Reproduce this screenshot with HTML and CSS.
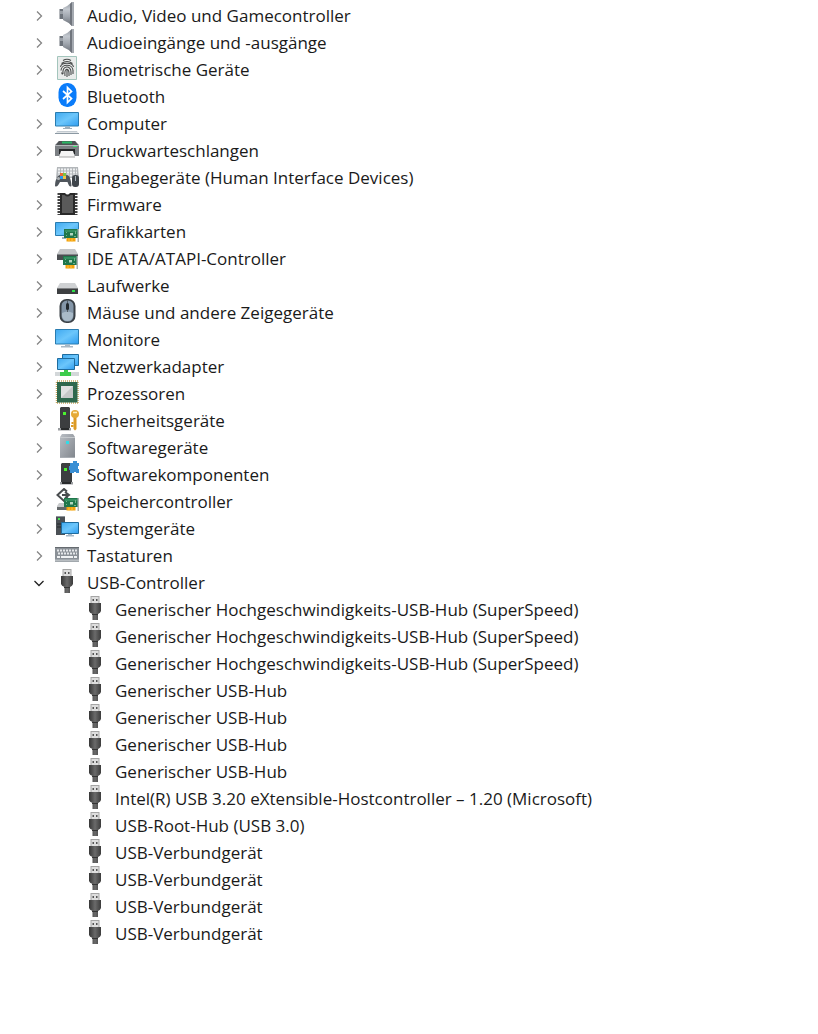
FILE: index.html
```html
<!DOCTYPE html>
<html lang="de">
<head>
    <meta charset="UTF-8">
    <meta name="viewport" content="width=device-width, initial-scale=1.0">
    <title>Geräte-Manager</title>
    <link rel="stylesheet" href="styles.css">
</head>
<body>
    <!-- shared shapes -->
    <svg class="defs" width="0" height="0" aria-hidden="true">
        <defs>
            <linearGradient id="screen" x1="0" y1="0" x2="1" y2="1">
                <stop offset="0" stop-color="#3fa9f0"/>
                <stop offset="0.5" stop-color="#6cc6fb"/>
                <stop offset="1" stop-color="#2f9df0"/>
            </linearGradient>
            <linearGradient id="steel" x1="0" y1="0" x2="0" y2="1">
                <stop offset="0" stop-color="#8b9199"/>
                <stop offset="0.3" stop-color="#c3c8cf"/>
                <stop offset="0.6" stop-color="#a1a7af"/>
                <stop offset="1" stop-color="#686d75"/>
            </linearGradient>
            <linearGradient id="silver" x1="0" y1="0" x2="1" y2="1">
                <stop offset="0" stop-color="#b9bec4"/>
                <stop offset="1" stop-color="#81868d"/>
            </linearGradient>
            <linearGradient id="plug" x1="0" y1="0" x2="1" y2="0">
                <stop offset="0" stop-color="#363636"/>
                <stop offset="0.5" stop-color="#6a6a6a"/>
                <stop offset="1" stop-color="#3c3c3c"/>
            </linearGradient>
            <symbol id="chevron" viewBox="0 0 12 12">
                <path d="M4 1.500l4.500 4.500L4 10.500" fill="none" stroke="currentColor" stroke-width="1.3"/>
            </symbol>
            <symbol id="speaker" viewBox="0 0 24 24">
                <path d="M4.500 7h4v10h-4z" fill="#6d737b"/>
                <path d="M5 9h3v3H5z" fill="#9ba1a8"/>
                <path d="M8 6q5-2 9-6v24q-4-4-9-6z" fill="url(#steel)"/>
                <path d="M15 2l2-2v24l-2-2z" fill="#70757d"/>
                <path d="M17 0h2v24h-2z" fill="#a5aab1"/>
            </symbol>
            <symbol id="usb" viewBox="0 0 24 24">
                <path d="M7.500 0h9v8h-9z" fill="#a5a5a5"/>
                <path d="M8.500 1h7v6h-7z" fill="#dedede"/>
                <path d="M9.500 3H11v2H9.500zM13 3h1.500v2H13z" fill="#555"/>
                <path d="M6 7h12v8q-.5 2-3 3v6H9.500v-6Q6.500 17 6 15z" fill="url(#plug)"/>
                <path d="M9 18.500h6" stroke="#353535"/>
            </symbol>
            <symbol id="card" viewBox="0 0 15 13">
                <path d="M0 0h14v9H0z" fill="#20774b"/>
                <path d="M1 1h12v2H1z" fill="#348f61"/>
                <path d="M6 4h3v2.500H6z" fill="#b3d8c2"/>
                <path d="M2 3h1v1H2zM2 6h1v1H2zM11 2h1v3h-1zM10 7h2v1h-2z" fill="#74b48d"/>
                <path d="M13.500 0H15v13h-1.500z" fill="#aab2b2"/>
                <path d="M2.500 9h9v3.500h-9z" fill="#f3a20b"/>
                <path d="M5 9.500v3M8 9.500v3" stroke="#ffc44c"/>
            </symbol>
        </defs>
    </svg>

    <main>
        <ul class="tree">
            <li>
                <div class="row">
                    <button class="toggle" type="button" aria-expanded="false" aria-labelledby="audio"><svg><use href="#chevron"/></svg></button>
                    <svg class="icon"><use href="#speaker"/></svg>
                    <span class="label" id="audio">Audio, Video und Gamecontroller</span>
                </div>
            </li>
            <li>
                <div class="row">
                    <button class="toggle" type="button" aria-expanded="false" aria-labelledby="audio-io"><svg><use href="#chevron"/></svg></button>
                    <svg class="icon"><use href="#speaker"/></svg>
                    <span class="label" id="audio-io">Audioeingänge und -ausgänge</span>
                </div>
            </li>
            <li>
                <div class="row">
                    <button class="toggle" type="button" aria-expanded="false" aria-labelledby="bio"><svg><use href="#chevron"/></svg></button>
                    <svg class="icon" viewBox="0 0 24 24">
                        <path d="M2.500 0.500h19v23h-19z" fill="#e9eceb" stroke="#a3c5bc"/>
                        <g fill="none" stroke="#484b4b" stroke-width="1.1">
                            <path d="M8 4.500q4-2.500 8 0M6.500 7.500q5.500-4 11 0M5.500 11c1-5 12-5 13 0M6 14.500c0-7 12-7 12 0M8 18c-1-9 8-9 8-2v3M10 20c-1-9 4-8 4-3v3M12 13v8M6.500 16.500l1 2M18 14v4"/>
                        </g>
                    </svg>
                    <span class="label" id="bio">Biometrische Geräte</span>
                </div>
            </li>
            <li>
                <div class="row">
                    <button class="toggle" type="button" aria-expanded="false" aria-labelledby="bt"><svg><use href="#chevron"/></svg></button>
                    <svg class="icon" viewBox="0 0 24 24">
                        <rect x="3.500" width="18" height="24" rx="8.500" ry="9.500" fill="#0a7cfa"/>
                        <path d="M8 8l8.500 7.500-4 4v-15l4 4L8 16" fill="none" stroke="#fff" stroke-width="1.700"/>
                    </svg>
                    <span class="label" id="bt">Bluetooth</span>
                </div>
            </li>
            <li>
                <div class="row">
                    <button class="toggle" type="button" aria-expanded="false" aria-labelledby="pc"><svg><use href="#chevron"/></svg></button>
                    <svg class="icon" viewBox="0 0 24 24">
                        <path d="M0.500 2.500h23v13.500H0.500z" fill="url(#screen)" stroke="#2a7cb0"/>
                        <path d="M10 16.500h5v1.500h2v1H8v-1h2z" fill="#9fb0bc"/>
                        <path d="M2 21h20l2 3H0z" fill="#dfe3e6"/>
                        <path d="M2 21.500h20" stroke="#c3cad0"/>
                        <path d="M0 23.500h24" stroke="#8c99a3"/>
                    </svg>
                    <span class="label" id="pc">Computer</span>
                </div>
            </li>
            <li>
                <div class="row">
                    <button class="toggle" type="button" aria-expanded="false" aria-labelledby="print"><svg><use href="#chevron"/></svg></button>
                    <svg class="icon" viewBox="0 0 24 24">
                        <path d="M4 4h16l4 4v11H0V8z" fill="#7b7f83"/>
                        <path d="M4 4h16l3 4H1z" fill="#4f5255"/>
                        <path d="M7 4.500h10v2H7z" fill="#29b765"/>
                        <path d="M0 8.500h24" stroke="#b3b7ba"/>
                        <path d="M18 9h4v1h-4z" fill="#38e26f"/>
                        <path d="M4 12h16v5H4z" fill="#252729"/>
                        <path d="M6 14h12l2 6H4z" fill="#f4f4f4"/>
                        <path d="M4 20h16" stroke="#a5a5a5"/>
                    </svg>
                    <span class="label" id="print">Druckwarteschlangen</span>
                </div>
            </li>
            <li>
                <div class="row">
                    <button class="toggle" type="button" aria-expanded="false" aria-labelledby="hid"><svg><use href="#chevron"/></svg></button>
                    <svg class="icon" viewBox="0 0 24 24">
                        <path d="M2 3h21l1 11H1z" fill="#b3b7ba"/>
                        <path d="M3 5.500h19M3 8.500h19M3 11.500h19" stroke="#eef0f1" stroke-width="1.800" stroke-dasharray="2 1"/>
                        <path d="M3 12q2-2 4 0h3q2-2 4 0 2 3 2.500 10-2 2-4-4H5q-3 6-5 4 0-6 3-10z" fill="#50565c"/>
                        <circle cx="3.500" cy="14.500" r="1.500" fill="#adb2b6"/>
                        <path d="M5 9h3v3H5z" fill="#e96a35"/>
                        <path d="M8 9h3v3H8z" fill="#7dc242"/>
                        <path d="M5 12h3v3H5z" fill="#2998ed"/>
                        <path d="M8 12h3v3H8z" fill="#f3c344"/>
                        <rect x="17" y="11" width="7" height="12" rx="3" fill="#3f454b"/>
                        <path d="M20.500 12v5" stroke="#a9b3bb"/>
                    </svg>
                    <span class="label" id="hid">Eingabegeräte (Human Interface Devices)</span>
                </div>
            </li>
            <li>
                <div class="row">
                    <button class="toggle" type="button" aria-expanded="false" aria-labelledby="fw"><svg><use href="#chevron"/></svg></button>
                    <svg class="icon" viewBox="0 0 24 24">
                        <path d="M4 2v22M21 2v22" stroke="#444" stroke-width="3" stroke-dasharray="2 1"/>
                        <path d="M5 2h5q2.500 3 5 0h5v22H5z" fill="#292929"/>
                        <path d="M7 4h2.500q3 3 6 0H18v18H7z" fill="#5a5a5a"/>
                    </svg>
                    <span class="label" id="fw">Firmware</span>
                </div>
            </li>
            <li>
                <div class="row">
                    <button class="toggle" type="button" aria-expanded="false" aria-labelledby="gpu"><svg><use href="#chevron"/></svg></button>
                    <svg class="icon" viewBox="0 0 24 24">
                        <path d="M0.500 4.500h23v13H0.500z" fill="url(#screen)" stroke="#2a7cb0"/>
                        <path d="M7 19h4v2H7z" fill="#9fb0bc"/>
                        <use href="#card" x="9" y="11" width="15" height="13"/>
                    </svg>
                    <span class="label" id="gpu">Grafikkarten</span>
                </div>
            </li>
            <li>
                <div class="row">
                    <button class="toggle" type="button" aria-expanded="false" aria-labelledby="ide"><svg><use href="#chevron"/></svg></button>
                    <svg class="icon" viewBox="0 0 24 24">
                        <path d="M5 4h15l3 5H2z" fill="#c3c5c7"/>
                        <path d="M2 9h21v6H2z" fill="#4b4e51"/>
                        <path d="M2 9.500h21" stroke="#85888b"/>
                        <use href="#card" x="8" y="11" width="15" height="13"/>
                    </svg>
                    <span class="label" id="ide">IDE ATA/ATAPI-Controller</span>
                </div>
            </li>
            <li>
                <div class="row">
                    <button class="toggle" type="button" aria-expanded="false" aria-labelledby="drive"><svg><use href="#chevron"/></svg></button>
                    <svg class="icon" viewBox="0 0 24 24">
                        <path d="M5 11h15l3 5H2z" fill="#cfd1d3"/>
                        <path d="M2 16h21v6H2z" fill="#3d3f41"/>
                        <path d="M2 16.500h21" stroke="#7f8183"/>
                        <path d="M17 18h3v2h-3z" fill="#2de04a"/>
                    </svg>
                    <span class="label" id="drive">Laufwerke</span>
                </div>
            </li>
            <li>
                <div class="row">
                    <button class="toggle" type="button" aria-expanded="false" aria-labelledby="mouse"><svg><use href="#chevron"/></svg></button>
                    <svg class="icon" viewBox="0 0 24 24">
                        <rect x="4.500" width="16" height="24" rx="7" fill="#3a4046"/>
                        <rect x="6.500" y="1.500" width="12" height="21" rx="5.500" fill="#8496a8"/>
                        <path d="M7 14q5.500-3 11 0v3q-1 5-5.500 5T7 17z" fill="#a9bac8"/>
                        <path d="M12.500 1v12" stroke="#515b64"/>
                        <rect x="11" y="4" width="3" height="7" rx="1.500" fill="#22282d"/>
                    </svg>
                    <span class="label" id="mouse">Mäuse und andere Zeigegeräte</span>
                </div>
            </li>
            <li>
                <div class="row">
                    <button class="toggle" type="button" aria-expanded="false" aria-labelledby="mon"><svg><use href="#chevron"/></svg></button>
                    <svg class="icon" viewBox="0 0 24 24">
                        <path d="M0.500 3.500h23v14.500H0.500z" fill="url(#screen)" stroke="#2a7cb0"/>
                        <path d="M10 18.500h5v1.500h3v1.500H6v-1.500h4z" fill="#a8b8c5"/>
                    </svg>
                    <span class="label" id="mon">Monitore</span>
                </div>
            </li>
            <li>
                <div class="row">
                    <button class="toggle" type="button" aria-expanded="false" aria-labelledby="net"><svg><use href="#chevron"/></svg></button>
                    <svg class="icon" viewBox="0 0 24 24">
                        <path d="M7.500 1.500h16v11h-16z" fill="url(#screen)" stroke="#1f6c9e"/>
                        <path d="M2.500 5.500h17v11h-17z" fill="url(#screen)" stroke="#1f6c9e"/>
                        <path d="M0 19h24v4H0z" fill="#d3d7d9"/>
                        <path d="M9 17h4v2h3v4H5v-4h4z" fill="#3dcc4c"/>
                    </svg>
                    <span class="label" id="net">Netzwerkadapter</span>
                </div>
            </li>
            <li>
                <div class="row">
                    <button class="toggle" type="button" aria-expanded="false" aria-labelledby="cpu"><svg><use href="#chevron"/></svg></button>
                    <svg class="icon" viewBox="0 0 24 24">
                        <path d="M2 1h21M2 23h21M1.500 2v21M23 2v21" stroke="#c7a45c" stroke-width="1.500" stroke-dasharray="1 1"/>
                        <path d="M2 2h20.500v20.500H2z" fill="#2f684d"/>
                        <path d="M6 6h12v12H6z" fill="#e0e1e1"/>
                        <path d="M18 6v12H6z" fill="#c6c8c8"/>
                    </svg>
                    <span class="label" id="cpu">Prozessoren</span>
                </div>
            </li>
            <li>
                <div class="row">
                    <button class="toggle" type="button" aria-expanded="false" aria-labelledby="sec"><svg><use href="#chevron"/></svg></button>
                    <svg class="icon" viewBox="0 0 24 24">
                        <path d="M5 1l1-1h8l1 1v20H5z" fill="#3c3e40"/>
                        <path d="M3 21h13v2.500H3z" fill="#9a9da0"/>
                        <path d="M6 21h8v2H6z" fill="#292b2c"/>
                        <path d="M8 5h3v3H8z" fill="#4af22f"/>
                        <path d="M18.500 9h3v13L20 23.500 18.500 22z" fill="#dc9a25"/>
                        <path d="M16.500 15h2v2h-2zM16 18h2.500v2H16z" fill="#dc9a25"/>
                        <circle cx="20" cy="7" r="4" fill="#e6aa38"/>
                        <path d="M18 5.500h4" stroke="#fff0c1" stroke-width="1.500"/>
                    </svg>
                    <span class="label" id="sec">Sicherheitsgeräte</span>
                </div>
            </li>
            <li>
                <div class="row">
                    <button class="toggle" type="button" aria-expanded="false" aria-labelledby="sw"><svg><use href="#chevron"/></svg></button>
                    <svg class="icon" viewBox="0 0 24 24">
                        <path d="M5 3l2-3h11l2 3v21H5z" fill="url(#silver)"/>
                        <path d="M5 3.500h15" stroke="#c5c9cd"/>
                        <path d="M11 7h3v3h-3z" fill="#31dce8"/>
                        <path d="M5 23.500h15" stroke="#a8adb3"/>
                    </svg>
                    <span class="label" id="sw">Softwaregeräte</span>
                </div>
            </li>
            <li>
                <div class="row">
                    <button class="toggle" type="button" aria-expanded="false" aria-labelledby="comp"><svg><use href="#chevron"/></svg></button>
                    <svg class="icon" viewBox="0 0 24 24">
                        <path d="M6 3l1-1h9l1 1v18H6z" fill="#3c3e40"/>
                        <path d="M5 21h13v2.500H5z" fill="#9a9da0"/>
                        <path d="M7 21h9v2H7z" fill="#292b2c"/>
                        <path d="M9 7h3v3H9z" fill="#4af22f"/>
                        <path d="M15 2h3V0h4v2h2v3h-1v3h1v4h-3v-1h-2v1h-4V9h-1V5h1z" fill="#3a8fd4"/>
                    </svg>
                    <span class="label" id="comp">Softwarekomponenten</span>
                </div>
            </li>
            <li>
                <div class="row">
                    <button class="toggle" type="button" aria-expanded="false" aria-labelledby="stor"><svg><use href="#chevron"/></svg></button>
                    <svg class="icon" viewBox="0 0 24 24">
                        <path d="M4 15h8l2 7H2v-4z" fill="#c8cacc"/>
                        <path d="M2 19h10v3H2z" fill="#65696b"/>
                        <path d="M12 3.500L9 1 2.500 7l6.500 6 4-3.500M7 7h7M10 4l4 3-4 3" fill="none" stroke="#494c4e" stroke-width="2"/>
                        <use href="#card" x="9" y="10" width="15" height="13"/>
                    </svg>
                    <span class="label" id="stor">Speichercontroller</span>
                </div>
            </li>
            <li>
                <div class="row">
                    <button class="toggle" type="button" aria-expanded="false" aria-labelledby="sys"><svg><use href="#chevron"/></svg></button>
                    <svg class="icon" viewBox="0 0 24 24">
                        <path d="M1 1h9v19H1z" fill="#4b5055"/>
                        <path d="M1 1.500h9" stroke="#8d949a"/>
                        <path d="M2 9h5M2 12h5" stroke="#24272a"/>
                        <path d="M3 3h2v2H3z" fill="#4ae455"/>
                        <path d="M6.500 7.500h17v11h-17z" fill="url(#screen)" stroke="#1f6c9e"/>
                        <path d="M13 19h4v1h2v1.500h-8V20h2z" fill="#a8b8c5"/>
                    </svg>
                    <span class="label" id="sys">Systemgeräte</span>
                </div>
            </li>
            <li>
                <div class="row">
                    <button class="toggle" type="button" aria-expanded="false" aria-labelledby="key"><svg><use href="#chevron"/></svg></button>
                    <svg class="icon" viewBox="0 0 24 24">
                        <path d="M0 5h24v15H0z" fill="#8b9197"/>
                        <path d="M0 5.500h24" stroke="#666b70"/>
                        <path d="M2 8.500h20M3 11.500h19" stroke="#e6e8ea" stroke-width="2" stroke-dasharray="2 1"/>
                        <path d="M2 15h3M6 15h12M19 15h3" stroke="#f0f2f3" stroke-width="2"/>
                        <path d="M0 18.500h24" stroke="#b9bec2" stroke-width="2"/>
                    </svg>
                    <span class="label" id="key">Tastaturen</span>
                </div>
            </li>
            <li>
                <div class="row">
                    <button class="toggle" type="button" aria-expanded="true" aria-controls="usb-list" aria-labelledby="usb-label"><svg><use href="#chevron"/></svg></button>
                    <svg class="icon"><use href="#usb"/></svg>
                    <span class="label" id="usb-label">USB-Controller</span>
                </div>
                <ul class="children" id="usb-list">
                    <li class="row"><svg class="icon"><use href="#usb"/></svg><span class="label">Generischer Hochgeschwindigkeits-USB-Hub (SuperSpeed)</span></li>
                    <li class="row"><svg class="icon"><use href="#usb"/></svg><span class="label">Generischer Hochgeschwindigkeits-USB-Hub (SuperSpeed)</span></li>
                    <li class="row"><svg class="icon"><use href="#usb"/></svg><span class="label">Generischer Hochgeschwindigkeits-USB-Hub (SuperSpeed)</span></li>
                    <li class="row"><svg class="icon"><use href="#usb"/></svg><span class="label">Generischer USB-Hub</span></li>
                    <li class="row"><svg class="icon"><use href="#usb"/></svg><span class="label">Generischer USB-Hub</span></li>
                    <li class="row"><svg class="icon"><use href="#usb"/></svg><span class="label">Generischer USB-Hub</span></li>
                    <li class="row"><svg class="icon"><use href="#usb"/></svg><span class="label">Generischer USB-Hub</span></li>
                    <li class="row"><svg class="icon"><use href="#usb"/></svg><span class="label">Intel(R) USB 3.20 eXtensible-Hostcontroller – 1.20 (Microsoft)</span></li>
                    <li class="row"><svg class="icon"><use href="#usb"/></svg><span class="label">USB-Root-Hub (USB 3.0)</span></li>
                    <li class="row"><svg class="icon"><use href="#usb"/></svg><span class="label">USB-Verbundgerät</span></li>
                    <li class="row"><svg class="icon"><use href="#usb"/></svg><span class="label">USB-Verbundgerät</span></li>
                    <li class="row"><svg class="icon"><use href="#usb"/></svg><span class="label">USB-Verbundgerät</span></li>
                    <li class="row"><svg class="icon"><use href="#usb"/></svg><span class="label">USB-Verbundgerät</span></li>
                </ul>
            </li>
        </ul>
    </main>

    <script>
    // Zweig auf- und zuklappen
    document.querySelectorAll('.toggle').forEach(button => {
        button.addEventListener('click', () => {
            const open = button.getAttribute('aria-expanded') === 'true';
            button.setAttribute('aria-expanded', !open);
            const list = button.closest('li').querySelector('.children');
            if (list) list.hidden = open;
        });
    });
    </script>
</body>
</html>
```
FILE: styles.css
```css
body {
    margin: 0;
    background-color: #fff;
    color: #1a1a1a;
    font-family: "Open Sans", "Noto Sans", sans-serif;
    font-size: 17px;
    line-height: 27px;
}

.defs {
    position: absolute;
}

.tree,
.children {
    list-style: none;
    margin: 0;
    padding: 0;
}

.tree {
    padding: 2px 16px 2px 31px;
}

.children {
    padding-left: 52px;
}

.row {
    display: flex;
    align-items: flex-start;
    min-height: 27px;
}

.toggle {
    display: flex;
    align-items: center;
    justify-content: center;
    flex: none;
    width: 16px;
    height: 27px;
    margin-right: 8px;
    padding: 0;
    border: none;
    background: none;
    color: #858585;
    cursor: pointer;
}

.toggle svg {
    width: 12px;
    height: 12px;
}

.toggle[aria-expanded="true"] {
    color: #222;
}

.toggle[aria-expanded="true"] svg {
    transform: rotate(90deg);
}

.icon {
    flex: none;
    width: 24px;
    height: 24px;
    margin-right: 8px;
}
```
